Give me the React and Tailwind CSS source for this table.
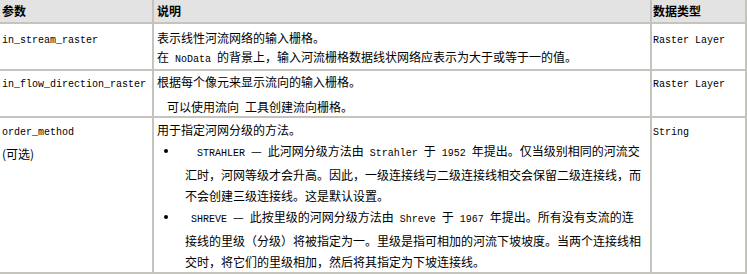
import React from "react";

const M = ({ children }) => (
  <span className="font-['Liberation_Mono',monospace] text-[10px]">{children}</span>
);

const Bullet = ({ lines }) => (
  <div className="flex">
    <div className="w-[28px] shrink-0">
      <div className="ml-[7px] mt-[9px] w-[4px] h-[4px] rounded-full bg-black" />
    </div>
    <div>
      {lines.map((l, i) => (
        <div key={i} className="leading-[21px] whitespace-nowrap">
          {l}
        </div>
      ))}
    </div>
  </div>
);

const App = () => {
  return (
    <div className="w-[747px] h-[274px] bg-white text-black text-[12px] font-['Noto_Sans_CJK_SC','Noto_Sans',sans-serif]">
      <div className="w-[747px] border-r-2 border-b-2 border-[#c4c4bc]">

        {/* header */}
        <div className="grid grid-cols-[154px_498px_93px] h-[24px] bg-[#e3e3e3] border-b-2 border-[#c4c4bc] font-bold">
          <div className="border-r-2 border-[#c4c4bc] pl-[2px] leading-[22px]">参数</div>
          <div className="border-r-2 border-[#c4c4bc] pl-[3px] leading-[22px]">说明</div>
          <div className="pl-[1px] leading-[22px]">数据类型</div>
        </div>

        {/* in_stream_raster */}
        <div className="grid grid-cols-[154px_498px_93px] h-[47px] border-b-2 border-[#c4c4bc]">
          <div className="border-r-2 border-[#c4c4bc] pl-[2px] pt-[4px] leading-[19px]">
            <M>in_stream_raster</M>
          </div>
          <div className="border-r-2 border-[#c4c4bc] pl-[3px] pt-[4px] leading-[19px]">
            <div>表示线性河流网络的输入栅格。</div>
            <div className="whitespace-nowrap">
              在<M> NoData </M>的背景上，输入河流栅格数据线状网络应表示为大于或等于一的值。
            </div>
          </div>
          <div className="pl-[1px] pt-[4px] leading-[19px]">
            <M>Raster Layer</M>
          </div>
        </div>

        {/* in_flow_direction_raster */}
        <div className="grid grid-cols-[154px_498px_93px] h-[47px] border-b-2 border-[#c4c4bc]">
          <div className="border-r-2 border-[#c4c4bc] pl-[2px] pt-[1px] leading-[19px]">
            <M>in_flow_direction_raster</M>
          </div>
          <div className="border-r-2 border-[#c4c4bc] pl-[3px] pt-[1px] leading-[19px]">
            <div>根据每个像元来显示流向的输入栅格。</div>
            <div className="mt-[6px] pl-[10px] whitespace-nowrap">
              可以使用流向<M> </M>工具创建流向栅格。
            </div>
          </div>
          <div className="pl-[1px] pt-[1px] leading-[19px]">
            <M>Raster Layer</M>
          </div>
        </div>

        {/* order_method */}
        <div className="grid grid-cols-[154px_498px_93px] h-[154px]">
          <div className="border-r-2 border-[#c4c4bc] pl-[2px] pt-[2px]">
            <div className="leading-[20px]">
              <M>order_method</M>
            </div>
            <div className="leading-[21px]">(可选)</div>
          </div>
          <div className="border-r-2 border-[#c4c4bc] pl-[3px] pt-[2px]">
            <div className="leading-[20px]">用于指定河网分级的方法。</div>
            <Bullet
              lines={[
                <>
                  <M>{"\u00a0\u00a0STRAHLER "}</M>—<M> </M>此河网分级方法由<M> Strahler </M>于
                  <M> 1952 </M>年提出。仅当级别相同的河流交
                </>,
                "汇时，河网等级才会升高。因此，一级连接线与二级连接线相交会保留二级连接线，而",
                "不会创建三级连接线。这是默认设置。",
              ]}
            />
            <Bullet
              lines={[
                <>
                  <M>{"\u00a0SHREVE "}</M>—<M> </M>此按里级的河网分级方法由<M> Shreve </M>于
                  <M> 1967 </M>年提出。所有没有支流的连
                </>,
                "接线的里级（分级）将被指定为一。里级是指可相加的河流下坡坡度。当两个连接线相",
                "交时，将它们的里级相加，然后将其指定为下坡连接线。",
              ]}
            />
          </div>
          <div className="pl-[1px] pt-[2px] leading-[20px]">
            <M>String</M>
          </div>
        </div>

      </div>
    </div>
  );
};

export default App;
